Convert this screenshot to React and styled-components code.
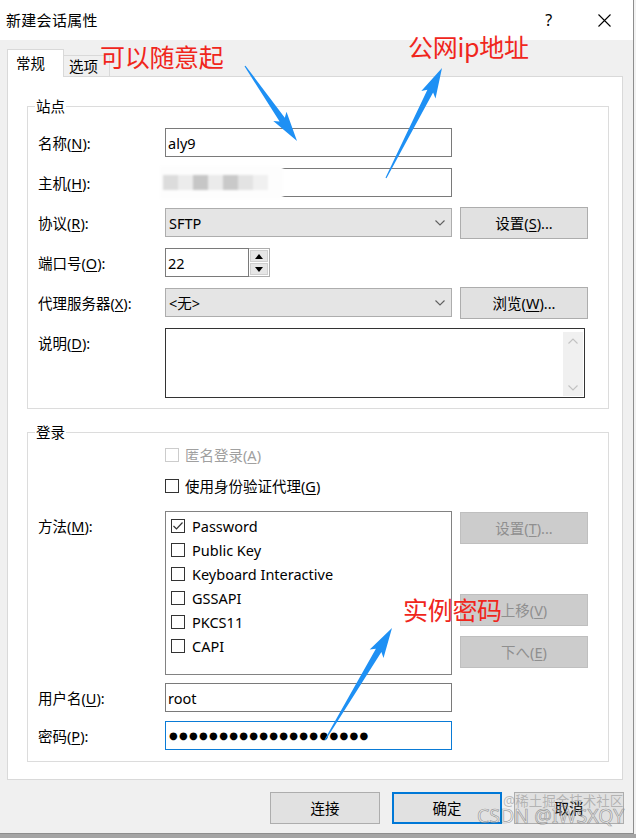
import React from "react";
import styled, { createGlobalStyle } from "styled-components";

const GlobalStyle = createGlobalStyle`
  html, body { margin: 0; padding: 0; }
  body {
    width: 636px; height: 838px; overflow: hidden; background: #a4a4a4;
    font-family: "Noto Sans", "Noto Sans CJK SC", sans-serif;
  }
  #root { width: 636px; height: 838px; }
  * { box-sizing: border-box; }
`;

const FONT = `"Noto Sans", "Noto Sans CJK SC", sans-serif`;

const Screen = styled.div`
  width: 636px; height: 838px; display: flex; align-items: flex-start; background: #a4a4a4;
`;
const RightStrip = styled.div`
  width: 2px; height: 834px; background: #f2f2f2;
`;
const Window = styled.div`
  position: relative; width: 634px; height: 834px; display: flex; flex-direction: column;
  background: #f0f0f0; border-right: 1px solid #8d8d8d; border-bottom: 1px solid #8d8d8d;
  font-family: ${FONT}; font-size: 14.5px; color: #000;
`;
const TitleBar = styled.div`
  height: 40px; flex: none; display: flex; align-items: center; background: #fff; padding-left: 6px;
`;
const Title = styled.div`
  font-size: 15px; line-height: 20px; letter-spacing: 0.3px;
`;
const TitleBtn = styled.div`
  width: 46px; height: 40px; display: flex; align-items: center; justify-content: center;
  font-size: 16px; font-family: "Noto Sans", sans-serif;
  margin-left: ${p => p.$ml || 0}px;
`;
const Body = styled.div`
  flex: 1; display: flex; flex-direction: column; padding: 9px 10px 0 7px;
`;
const TabRow = styled.div`
  height: 28px; display: flex; align-items: flex-start; margin-bottom: -1px;
`;
const Tab = styled.div`
  position: relative;
  width: ${p => (p.$active ? 57 : 46)}px;
  height: ${p => (p.$active ? 28 : 21)}px;
  margin-top: ${p => (p.$active ? 0 : 6)}px;
  padding: 0 0 0 ${p => (p.$active ? 8 : 5)}px;
  background: ${p => (p.$active ? "#fff" : "#f0f0f0")};
  border: 1px solid #d9d9d9;
  border-bottom: none;
  border-left: ${p => (p.$active ? "1px solid #d9d9d9" : "none")};
  display: flex; align-items: ${p => (p.$active ? "flex-start" : "center")};
  padding-top: ${p => (p.$active ? 3 : 0)}px;
  line-height: 20px;
`;
const Panel = styled.div`
  height: 704px; flex: none; background: #fff; border: 1px solid #d9d9d9;
  padding: 19px 13px 0 19px;
`;
const Group = styled.fieldset`
  margin: ${p => p.$mt || 0}px 0 0 0; padding: 0 20px ${p => p.$pb}px 10px;
  border: 1px solid #dcdcdc; min-width: 0;
`;
const Legend = styled.legend`
  margin-left: -3px; padding: 0 1px; line-height: 20px; font-size: 14.5px;
`;
const Rows = styled.div`
  display: flex; flex-direction: column; gap: ${p => p.$gap || 11}px; padding-top: ${p => p.$pt || 0}px;
`;
const Row = styled.div`
  display: flex; align-items: ${p => (p.$top ? "flex-start" : "center")};
  height: ${p => p.$h || 29}px; margin-top: ${p => p.$mt || 0}px;
`;
const Label = styled.div`
  width: 127px; flex: none; line-height: 20px; white-space: nowrap;
  padding-top: ${p => p.$pt || 0}px;
`;
const U = styled.span`
  text-decoration: underline; text-underline-offset: 2px; text-decoration-thickness: 1px;
`;
const Field = styled.div`
  position: relative; width: ${p => p.$w || 287}px; height: 29px; flex: none;
  border: 1px solid ${p => (p.$focus ? "#0a7bd6" : "#7a7a7a")}; background: #fff;
  display: flex; align-items: center; padding: 0 2px; line-height: 20px;
`;
const Dots = styled.span`
  font-family: "DejaVu Sans", sans-serif; font-size: 10px; letter-spacing: 1.3px; padding-left: 1px;
`;
const Select = styled.div`
  width: 287px; height: 29px; flex: none; border: 1px solid #adadad; background: #e5e5e5;
  display: flex; align-items: center; justify-content: space-between; padding: 0 6px 0 3px;
  line-height: 20px;
`;
const Button = styled.button`
  width: ${p => p.$w || 128}px; height: 32px; flex: none; margin-left: ${p => p.$ml || 0}px;
  margin-top: ${p => p.$mt || 0}px;
  font-family: ${FONT}; font-size: 14.5px; line-height: 20px; padding: 0;
  color: ${p => (p.$disabled ? "#8f8f8f" : "#000")};
  background: ${p => (p.$disabled ? "#cccccc" : "#e1e1e1")};
  border: ${p => (p.$default ? "2px solid #0078d7" : p.$disabled ? "1px solid #bfbfbf" : "1px solid #adadad")};
`;
const Spin = styled.div`
  width: 22px; height: 29px; flex: none; margin-left: -1px; border: 1px solid #adadad; background: #fff;
  display: flex; flex-direction: column; padding: 1px; gap: 1px;
`;
const SpinBtn = styled.div`
  flex: 1; background: #e6e6e6; border: 1px solid #cfcfcf; display: flex; align-items: center; justify-content: center;
`;
const TextArea = styled.div`
  width: 420px; height: 70px; flex: none; border: 1px solid #333; background: #fff;
  display: flex; justify-content: flex-end; padding: 3px 1px 1px 0;
`;
const Track = styled.div`
  width: 20px; background: #f0f0f0; display: flex; flex-direction: column; justify-content: space-between;
  align-items: center; padding: 6px 0 5px;
`;
const CheckRow = styled.div`
  display: flex; align-items: center; height: 20px; padding-left: 127px; gap: 6px;
  margin-top: ${p => p.$mt || 0}px; color: ${p => (p.$disabled ? "#a0a0a0" : "#000")};
  line-height: 20px;
`;
const Box = styled.span`
  width: 14px; height: 14px; flex: none; background: #fff;
  border: 1px solid ${p => (p.$disabled ? "#cccccc" : "#333")};
  display: flex; align-items: center; justify-content: center;
`;
const MethodRow = styled.div`
  display: flex; align-items: flex-start; margin-top: 15px;
`;
const List = styled.div`
  width: 287px; height: 164px; flex: none; border: 1px solid #828282; background: #fff;
  padding: 2px 5px; display: flex; flex-direction: column;
`;
const Item = styled.div`
  height: 24px; display: flex; align-items: center; gap: 7px; line-height: 20px;
`;
const SideCol = styled.div`
  display: flex; flex-direction: column; margin-left: 8px; padding-top: 1px;
`;
const Footer = styled.div`
  display: flex; justify-content: flex-end; gap: 12px; padding: 12px 0 0 0; margin-right: -1px;
`;
const Mosaic = styled.div`
  position: absolute; left: -6px; top: -3px; width: 123px; height: 33px;
  background: #fdfdfd; filter: blur(1.2px); display: flex; align-items: center; padding-left: 3px;
`;
const Tile = styled.div`
  width: 15px; height: 15px; background: ${p => p.$c};
`;
const Overlay = styled.div`
  position: absolute; inset: 0; pointer-events: none;
`;
const Note = styled.div`
  position: absolute; left: ${p => p.$x}px; top: ${p => p.$y}px;
  font-family: "Noto Sans CJK SC", sans-serif; font-size: 25px; line-height: 1; color: #f0261c;
  white-space: nowrap; letter-spacing: -0.3px;
`;
const Water = styled.div`
  position: absolute; left: ${p => p.$x}px; top: ${p => p.$y}px; white-space: nowrap; line-height: 1;
  font-family: "Noto Sans", "Noto Sans CJK SC", sans-serif; font-size: ${p => p.$s}px;
  color: ${p => p.$c}; -webkit-text-stroke: ${p => p.$stroke || "0"};
`;

function arrowPoints(tx, ty, px, py, L = 26, H = 8, w = 3.2, t = 0.6) {
  const dx = px - tx, dy = py - ty;
  const len = Math.hypot(dx, dy);
  const ux = dx / len, uy = dy / len, nx = -uy, ny = ux;
  const bx = px - ux * L, by = py - uy * L;
  const pts = [
    [tx + nx * t, ty + ny * t],
    [bx + nx * w, by + ny * w],
    [bx - ux * 4 + nx * H, by - uy * 4 + ny * H],
    [px, py],
    [bx - ux * 4 - nx * H, by - uy * 4 - ny * H],
    [bx - nx * w, by - ny * w],
    [tx - nx * t, ty - ny * t],
  ];
  return pts.map(p => p.map(v => v.toFixed(1)).join(",")).join(" ");
}

const Chevron = ({ up, color = "#606060", w = 10, h = 6 }) => (
  <svg width={w} height={h} viewBox="0 0 10 6">
    <path d={up ? "M0.5 5.5 L5 1 L9.5 5.5" : "M0.5 0.5 L5 5 L9.5 0.5"} fill="none" stroke={color} strokeWidth="1.1" />
  </svg>
);
const Tri = ({ up }) => (
  <svg width="8" height="5" viewBox="0 0 8 5">
    <path d={up ? "M0 5 L4 0 L8 5 Z" : "M0 0 L4 5 L8 0 Z"} fill="#000" />
  </svg>
);
const Check = () => (
  <svg width="12" height="10" viewBox="0 0 12 10">
    <path d="M1.5 5 L4.5 8 L10.5 1.5" fill="none" stroke="#333" strokeWidth="1.2" />
  </svg>
);

const methods = ["Password", "Public Key", "Keyboard Interactive", "GSSAPI", "PKCS11", "CAPI"];
const tiles = ["#dcdcdc", "#ececec", "#c6c6c6", "#ebebeb", "#c9c9c9", "#e3e3e3", "#f0f0f0"];

export default function App() {
  return (
    <Screen>
      <GlobalStyle />
      <Window>
        <TitleBar>
          <Title>新建会话属性</Title>
          <TitleBtn $ml={428}>?</TitleBtn>
          <TitleBtn $ml={10}>
            <svg width="13" height="13" viewBox="0 0 13 13">
              <path d="M0.5 0.5 L12.5 12.5 M12.5 0.5 L0.5 12.5" stroke="#000" strokeWidth="1.1" />
            </svg>
          </TitleBtn>
        </TitleBar>
        <Body>
          <TabRow>
            <Tab $active>常规</Tab>
            <Tab>选项</Tab>
          </TabRow>
          <Panel>
            <Group $pb={10}>
              <Legend>站点</Legend>
              <Rows $pt={12}>
                <Row>
                  <Label>名称(<U>N</U>):</Label>
                  <Field>aly9</Field>
                </Row>
                <Row>
                  <Label>主机(<U>H</U>):</Label>
                  <Field>
                    <Mosaic>
                      {tiles.map((c, i) => <Tile key={i} $c={c} />)}
                    </Mosaic>
                  </Field>
                </Row>
                <Row>
                  <Label>协议(<U>R</U>):</Label>
                  <Select>SFTP<Chevron /></Select>
                  <Button $ml={8}>设置(<U>S</U>)...</Button>
                </Row>
                <Row>
                  <Label>端口号(<U>O</U>):</Label>
                  <Field $w={84}>22</Field>
                  <Spin>
                    <SpinBtn><Tri up /></SpinBtn>
                    <SpinBtn><Tri /></SpinBtn>
                  </Spin>
                </Row>
                <Row>
                  <Label>代理服务器(<U>X</U>):</Label>
                  <Select>&lt;无&gt;<Chevron /></Select>
                  <Button $ml={8}>浏览(<U>W</U>)...</Button>
                </Row>
                <Row $top $h={70}>
                  <Label $pt={5}>说明(<U>D</U>):</Label>
                  <TextArea>
                    <Track>
                      <Chevron up color="#c2c2c2" />
                      <Chevron color="#c2c2c2" />
                    </Track>
                  </TextArea>
                </Row>
              </Rows>
            </Group>

            <Group $mt={13} $pb={11}>
              <Legend>登录</Legend>
              <CheckRow $mt={3} $disabled>
                <Box $disabled />
                <span>匿名登录(<U>A</U>)</span>
              </CheckRow>
              <CheckRow $mt={11}>
                <Box />
                <span>使用身份验证代理(<U>G</U>)</span>
              </CheckRow>
              <MethodRow>
                <Label $pt={5}>方法(<U>M</U>):</Label>
                <List>
                  {methods.map((m, i) => (
                    <Item key={m}>
                      <Box>{i === 0 && <Check />}</Box>
                      <span>{m}</span>
                    </Item>
                  ))}
                </List>
                <SideCol>
                  <Button $disabled>设置(<U>T</U>)...</Button>
                  <Button $disabled $mt={50}>上移(<U>V</U>)</Button>
                  <Button $disabled $mt={10}>下へ(<U>E</U>)</Button>
                </SideCol>
              </MethodRow>
              <Rows $pt={8} $gap={9}>
                <Row>
                  <Label>用户名(<U>U</U>):</Label>
                  <Field>root</Field>
                </Row>
                <Row>
                  <Label>密码(<U>P</U>):</Label>
                  <Field $focus><Dots>{"●".repeat(20)}</Dots></Field>
                </Row>
              </Rows>
            </Group>
          </Panel>
          <Footer>
            <Button $w={110}>连接</Button>
            <Button $w={110} $default>确定</Button>
            <Button $w={110}>取消</Button>
          </Footer>
        </Body>

        <Overlay>
          <Note $x={100} $y={44}>可以随意起</Note>
          <Note $x={408} $y={34}>公网ip地址</Note>
          <Note $x={403} $y={597}>实例密码</Note>
          <svg width="634" height="834" viewBox="0 0 634 834">
            <polygon points={arrowPoints(245, 66, 297, 141)} fill="#1e90f4" />
            <polygon points={arrowPoints(386, 178, 442, 68)} fill="#1e90f4" />
            <polygon points={arrowPoints(325, 740, 392, 628)} fill="#1e90f4" />
          </svg>
          <Water $x={503} $y={795} $s={13.5} $c="rgba(120,120,120,0.45)">@稀土掘金技术社区</Water>
          <Water $x={477} $y={806} $s={19.5} $c="rgba(255,255,255,0.35)" $stroke="0.7px rgba(100,100,100,0.6)">CSDN @IWSXQY</Water>
        </Overlay>
      </Window>
      <RightStrip />
    </Screen>
  );
}
